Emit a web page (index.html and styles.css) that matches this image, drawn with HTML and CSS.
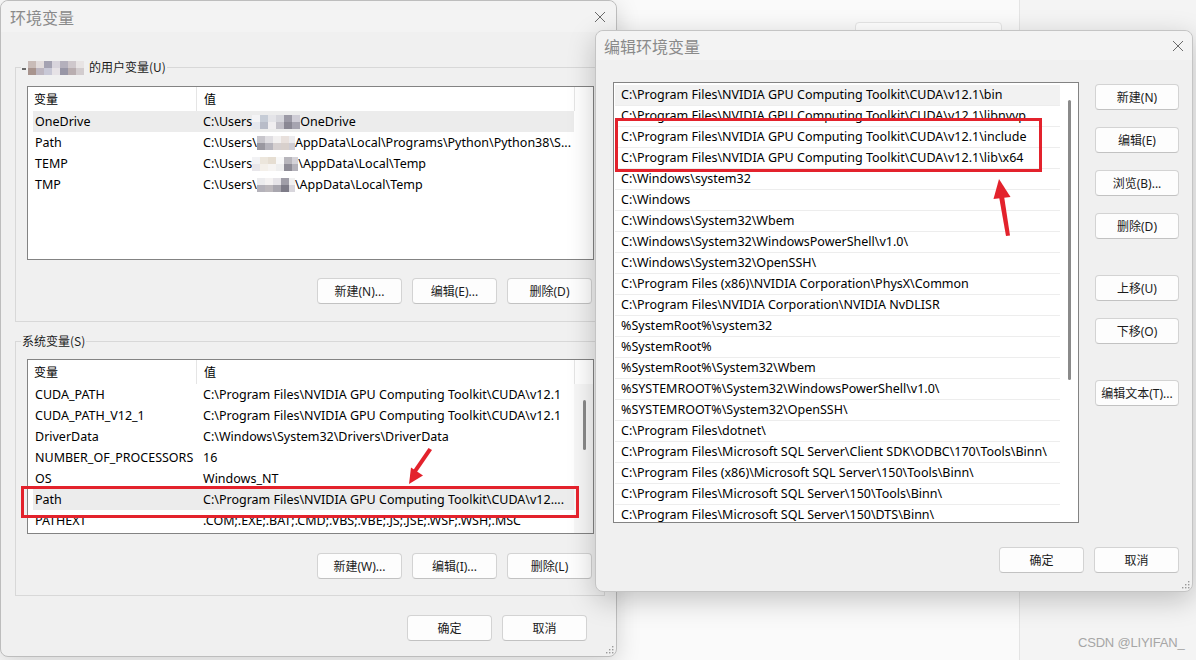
FILE: index.html
```html
<!DOCTYPE html>
<html lang="zh-CN">
<head>
    <meta charset="UTF-8">
    <title>环境变量</title>
    <link rel="stylesheet" href="styles.css">
</head>
<body>
<div class="desktop">
    <div class="bg-pane"></div>
    <div class="bg-box"></div>
    <div class="watermark">CSDN @LIYIFAN_</div>

    <!-- 环境变量 -->
    <section class="dialog env-dialog">
        <header class="titlebar">
            <span class="title">环境变量</span>
            <svg class="close" width="12" height="12" viewBox="0 0 12 12"><path d="M1 1L11 11M11 1L1 11"/></svg>
        </header>
        <div class="env-body">
            <fieldset class="group group-user">
                <legend>
                    <svg class="mosaic" width="64" height="16" viewBox="0 0 64 16">
                        <rect x="0" y="9" width="4" height="2" fill="#6a6a6a"/>
                        <rect x="6" y="2" width="8" height="7" fill="#c9bcb8"/>
                        <rect x="6" y="9" width="8" height="7" fill="#a8948e"/>
                        <rect x="14" y="2" width="8" height="7" fill="#e2dcdc"/>
                        <rect x="14" y="9" width="8" height="7" fill="#bdb6c0"/>
                        <rect x="22" y="2" width="8" height="7" fill="#a4a2b2"/>
                        <rect x="22" y="9" width="8" height="7" fill="#c8c8d6"/>
                        <rect x="30" y="2" width="8" height="7" fill="#d8d4dc"/>
                        <rect x="30" y="9" width="8" height="7" fill="#e6e2e6"/>
                        <rect x="38" y="2" width="8" height="7" fill="#b4b0bc"/>
                        <rect x="38" y="9" width="8" height="7" fill="#9896a6"/>
                        <rect x="46" y="2" width="8" height="7" fill="#cfc8cc"/>
                        <rect x="46" y="9" width="8" height="7" fill="#b9aeb0"/>
                        <rect x="54" y="2" width="8" height="7" fill="#e8e4e4"/>
                        <rect x="54" y="9" width="8" height="7" fill="#d2ccce"/>
                    </svg>
                    <span>的用户变量(U)</span>
                </legend>
                <div class="listview lv-user">
                    <div class="lv-head"><span class="col-name">变量</span><span class="col-value">值</span><span class="col-end"></span></div>
                    <div class="lv-body">
                        <div class="lv-rows">
                            <div class="lv-row selected"><span class="col-name">OneDrive</span><span class="col-value">C:\Users<svg class="mosaic" width="48" height="14" viewBox="0 0 48 14"><rect x="0" y="0" width="8" height="7" fill="#f4f4f6"/><rect x="0" y="7" width="8" height="7" fill="#e6e8ee"/><rect x="8" y="0" width="8" height="7" fill="#c6ccd6"/><rect x="8" y="7" width="8" height="7" fill="#b8bcc8"/><rect x="16" y="0" width="8" height="7" fill="#e4e4e8"/><rect x="16" y="7" width="8" height="7" fill="#f0eef0"/><rect x="24" y="0" width="8" height="7" fill="#d6d6dc"/><rect x="24" y="7" width="8" height="7" fill="#c2c0c8"/><rect x="32" y="0" width="8" height="7" fill="#9c9aa6"/><rect x="32" y="7" width="8" height="7" fill="#8a8894"/><rect x="40" y="0" width="8" height="7" fill="#cfcdd6"/><rect x="40" y="7" width="8" height="7" fill="#a6a4b0"/></svg>OneDrive</span></div>
                            <div class="lv-row"><span class="col-name">Path</span><span class="col-value">C:\Users\<svg class="mosaic" width="38" height="14" viewBox="0 0 38 14"><rect x="0" y="0" width="8" height="7" fill="#c8c6cc"/><rect x="0" y="7" width="8" height="7" fill="#9a98a0"/><rect x="8" y="0" width="8" height="7" fill="#e0dee2"/><rect x="8" y="7" width="8" height="7" fill="#b6b4bc"/><rect x="16" y="0" width="8" height="7" fill="#f2f0f0"/><rect x="16" y="7" width="8" height="7" fill="#d6d0d0"/><rect x="24" y="0" width="8" height="7" fill="#e8e0dc"/><rect x="24" y="7" width="8" height="7" fill="#d8d0cc"/><rect x="32" y="0" width="6" height="7" fill="#ecebee"/><rect x="32" y="7" width="6" height="7" fill="#cfcdd4"/></svg>AppData\Local\Programs\Python\Python38\S...</span></div>
                            <div class="lv-row"><span class="col-name">TEMP</span><span class="col-value">C:\Users<svg class="mosaic" width="46" height="14" viewBox="0 0 46 14"><rect x="0" y="0" width="8" height="7" fill="#f2f2f4"/><rect x="0" y="7" width="8" height="7" fill="#e8e6ea"/><rect x="8" y="0" width="8" height="7" fill="#ece6dc"/><rect x="8" y="7" width="8" height="7" fill="#f4f0ea"/><rect x="16" y="0" width="8" height="7" fill="#e6ded2"/><rect x="16" y="7" width="8" height="7" fill="#f6f4f2"/><rect x="24" y="0" width="8" height="7" fill="#f8f8f8"/><rect x="24" y="7" width="8" height="7" fill="#eeeeee"/><rect x="32" y="0" width="8" height="7" fill="#b8b6bc"/><rect x="32" y="7" width="8" height="7" fill="#8e8c96"/><rect x="40" y="0" width="6" height="7" fill="#d4d2d8"/><rect x="40" y="7" width="6" height="7" fill="#b4b2ba"/></svg>\AppData\Local\Temp</span></div>
                            <div class="lv-row"><span class="col-name">TMP</span><span class="col-value">C:\Users\<svg class="mosaic" width="38" height="14" viewBox="0 0 38 14"><rect x="0" y="0" width="8" height="7" fill="#ececee"/><rect x="0" y="7" width="8" height="7" fill="#b4b2ba"/><rect x="8" y="0" width="8" height="7" fill="#f4f2f2"/><rect x="8" y="7" width="8" height="7" fill="#bcb8bc"/><rect x="16" y="0" width="8" height="7" fill="#e6e4e8"/><rect x="16" y="7" width="8" height="7" fill="#a8a6ae"/><rect x="24" y="0" width="8" height="7" fill="#a09ea8"/><rect x="24" y="7" width="8" height="7" fill="#7e7c88"/><rect x="32" y="0" width="6" height="7" fill="#f0f0f0"/><rect x="32" y="7" width="6" height="7" fill="#d8d6dc"/></svg>\AppData\Local\Temp</span></div>
                        </div>
                        <div class="lv-scroll"></div>
                    </div>
                </div>
                <div class="btn-row">
                    <button class="btn">新建(N)...</button>
                    <button class="btn">编辑(E)...</button>
                    <button class="btn">删除(D)</button>
                </div>
            </fieldset>

            <fieldset class="group group-system">
                <legend><span>系统变量(S)</span></legend>
                <div class="listview lv-system">
                    <div class="lv-head"><span class="col-name">变量</span><span class="col-value">值</span><span class="col-end"></span></div>
                    <div class="lv-body">
                        <div class="lv-rows">
                            <div class="lv-row"><span class="col-name">CUDA_PATH</span><span class="col-value">C:\Program Files\NVIDIA GPU Computing Toolkit\CUDA\v12.1</span></div>
                            <div class="lv-row"><span class="col-name">CUDA_PATH_V12_1</span><span class="col-value">C:\Program Files\NVIDIA GPU Computing Toolkit\CUDA\v12.1</span></div>
                            <div class="lv-row"><span class="col-name">DriverData</span><span class="col-value">C:\Windows\System32\Drivers\DriverData</span></div>
                            <div class="lv-row"><span class="col-name">NUMBER_OF_PROCESSORS</span><span class="col-value">16</span></div>
                            <div class="lv-row"><span class="col-name">OS</span><span class="col-value">Windows_NT</span></div>
                            <div class="lv-row selected"><span class="col-name">Path</span><span class="col-value">C:\Program Files\NVIDIA GPU Computing Toolkit\CUDA\v12....</span></div>
                            <div class="lv-row"><span class="col-name">PATHEXT</span><span class="col-value">.COM;.EXE;.BAT;.CMD;.VBS;.VBE;.JS;.JSE;.WSF;.WSH;.MSC</span></div>
                        </div>
                        <div class="lv-scroll has-track"><div class="thumb"></div></div>
                    </div>
                </div>
                <div class="btn-row">
                    <button class="btn">新建(W)...</button>
                    <button class="btn">编辑(I)...</button>
                    <button class="btn">删除(L)</button>
                </div>
            </fieldset>

            <div class="actions env-actions">
                <button class="btn">确定</button>
                <button class="btn">取消</button>
            </div>
        </div>
        <svg class="grip" width="9" height="9" viewBox="0 0 9 9"><g fill="#9a9a9a"><rect x="7" y="1" width="1.4" height="1.4"/><rect x="4" y="4" width="1.4" height="1.4"/><rect x="7" y="4" width="1.4" height="1.4"/><rect x="1" y="7" width="1.4" height="1.4"/><rect x="4" y="7" width="1.4" height="1.4"/><rect x="7" y="7" width="1.4" height="1.4"/></g></svg>
    </section>

    <!-- 编辑环境变量 -->
    <section class="dialog edit-dialog">
        <header class="titlebar">
            <span class="title">编辑环境变量</span>
            <svg class="close" width="12" height="12" viewBox="0 0 12 12"><path d="M1 1L11 11M11 1L1 11"/></svg>
        </header>
        <div class="edit-body">
            <div class="edit-main">
                <div class="path-list">
                    <div class="path-rows">
                        <div class="path-row selected">C:\Program Files\NVIDIA GPU Computing Toolkit\CUDA\v12.1\bin</div>
                        <div class="path-row">C:\Program Files\NVIDIA GPU Computing Toolkit\CUDA\v12.1\libnvvp</div>
                        <div class="path-row">C:\Program Files\NVIDIA GPU Computing Toolkit\CUDA\v12.1\include</div>
                        <div class="path-row">C:\Program Files\NVIDIA GPU Computing Toolkit\CUDA\v12.1\lib\x64</div>
                        <div class="path-row">C:\Windows\system32</div>
                        <div class="path-row">C:\Windows</div>
                        <div class="path-row">C:\Windows\System32\Wbem</div>
                        <div class="path-row">C:\Windows\System32\WindowsPowerShell\v1.0\</div>
                        <div class="path-row">C:\Windows\System32\OpenSSH\</div>
                        <div class="path-row">C:\Program Files (x86)\NVIDIA Corporation\PhysX\Common</div>
                        <div class="path-row">C:\Program Files\NVIDIA Corporation\NVIDIA NvDLISR</div>
                        <div class="path-row">%SystemRoot%\system32</div>
                        <div class="path-row">%SystemRoot%</div>
                        <div class="path-row">%SystemRoot%\System32\Wbem</div>
                        <div class="path-row">%SYSTEMROOT%\System32\WindowsPowerShell\v1.0\</div>
                        <div class="path-row">%SYSTEMROOT%\System32\OpenSSH\</div>
                        <div class="path-row">C:\Program Files\dotnet\</div>
                        <div class="path-row">C:\Program Files\Microsoft SQL Server\Client SDK\ODBC\170\Tools\Binn\</div>
                        <div class="path-row">C:\Program Files (x86)\Microsoft SQL Server\150\Tools\Binn\</div>
                        <div class="path-row">C:\Program Files\Microsoft SQL Server\150\Tools\Binn\</div>
                        <div class="path-row">C:\Program Files\Microsoft SQL Server\150\DTS\Binn\</div>
                    </div>
                    <div class="path-scroll"><div class="thumb"></div></div>
                </div>
                <div class="side-btns">
                    <button class="btn">新建(N)</button>
                    <button class="btn">编辑(E)</button>
                    <button class="btn">浏览(B)...</button>
                    <button class="btn">删除(D)</button>
                    <button class="btn spaced">上移(U)</button>
                    <button class="btn">下移(O)</button>
                    <button class="btn spaced">编辑文本(T)...</button>
                </div>
            </div>
            <div class="actions edit-actions">
                <button class="btn">确定</button>
                <button class="btn">取消</button>
            </div>
        </div>
        <svg class="grip" width="9" height="9" viewBox="0 0 9 9"><g fill="#9a9a9a"><rect x="7" y="1" width="1.4" height="1.4"/><rect x="4" y="4" width="1.4" height="1.4"/><rect x="7" y="4" width="1.4" height="1.4"/><rect x="1" y="7" width="1.4" height="1.4"/><rect x="4" y="7" width="1.4" height="1.4"/><rect x="7" y="7" width="1.4" height="1.4"/></g></svg>
    </section>

    <!-- red marks drawn over the screenshot -->
    <svg class="annotations" width="1196" height="660" viewBox="0 0 1196 660">
        <rect x="22.5" y="487.5" width="555" height="29" fill="none" stroke="#e3222c" stroke-width="3"/>
        <polygon points="432,450 428.5,448 413,470.5 416.5,472.5" fill="#e3222c"/>
        <polygon points="409,484 411,467.5 423,475.5" fill="#e3222c"/>
        <rect x="616.5" y="119.5" width="424" height="51" fill="none" stroke="#e3222c" stroke-width="3"/>
        <polygon points="1006,236 1010,235.5 1004,196 999,196.5" fill="#e3222c"/>
        <polygon points="999,179 993.5,199 1010.5,197" fill="#e3222c"/>
    </svg>
</div>
</body>
</html>
```

FILE: styles.css
```css
* {
    margin: 0;
    padding: 0;
    box-sizing: border-box;
}

body {
    font-family: "Noto Sans", "Noto Sans CJK SC", sans-serif;
    font-size: 12.5px;
    color: #000;
    background: #f9f9f9;
}

.desktop {
    position: relative;
    width: 1196px;
    height: 660px;
    overflow: hidden;
    background: #fafafa;
}

/* page behind the dialogs */
.bg-pane {
    position: absolute;
    left: 1019px;
    top: 0;
    width: 177px;
    height: 660px;
    background: #f4f4f4;
    border-left: 1px solid #e4e4e4;
}

.bg-box {
    position: absolute;
    left: 855px;
    top: 22px;
    width: 147px;
    height: 40px;
    background: #fff;
    border: 1px solid #e6e6e6;
    border-radius: 4px;
}

.watermark {
    position: absolute;
    left: 1078px;
    top: 635px;
    font-family: "Liberation Sans", sans-serif;
    font-size: 13px;
    letter-spacing: -0.2px;
    color: #a6a6a6;
}

.annotations {
    position: absolute;
    left: 0;
    top: 0;
    pointer-events: none;
}

/* dialog windows */
.dialog {
    position: absolute;
    background: #f0f0f0;
    border: 1px solid #bdbdbd;
    border-radius: 8px;
    box-shadow: 0 6px 24px rgba(0, 0, 0, 0.16);
}

.env-dialog {
    left: 0;
    top: 0;
    width: 617px;
    height: 657px;
}

.edit-dialog {
    left: 595px;
    top: 30px;
    width: 598px;
    height: 562px;
    border-color: #c4c4c4;
    box-shadow: 0 8px 28px rgba(0, 0, 0, 0.22);
}

.titlebar {
    display: flex;
    align-items: center;
    justify-content: space-between;
    background: #f3f3f3;
    border-radius: 8px 8px 0 0;
}

.env-dialog .titlebar {
    height: 31px;
    padding: 0 10px 0 9px;
}

.edit-dialog .titlebar {
    height: 29px;
    padding: 0 8px 0 8px;
}

.title {
    font-family: "Noto Sans CJK SC", sans-serif;
    font-size: 16px;
    color: #8a8a8a;
}

.close {
    fill: none;
    stroke: #6a6a6a;
    stroke-width: 1;
}

.grip {
    position: absolute;
    right: 2px;
    bottom: 2px;
}

/* buttons */
.btn {
    width: 85px;
    height: 26px;
    font-family: "Noto Sans", "Noto Sans CJK SC", sans-serif;
    font-size: 12px;
    color: #1b1b1b;
    background: #fdfdfd;
    border: 1px solid #d3d3d3;
    border-bottom-color: #c2c2c2;
    border-radius: 4px;
}

.btn-row {
    display: flex;
    justify-content: flex-end;
    gap: 10px;
    width: 567px;
    padding-right: 2px;
}

.actions {
    display: flex;
    justify-content: flex-end;
    gap: 10px;
}

/* 环境变量 body */
.env-body {
    padding: 27px 0 0 14px;
}

.group {
    width: 590px;
    border: 1px solid #d8d8d8;
    padding: 0 10px 0 11px;
}

.group legend {
    display: flex;
    align-items: center;
    gap: 3px;
    height: 16px;
    line-height: 16px;
    margin-left: -6px;
    padding: 0 1px;
    font-family: "Noto Sans CJK SC", sans-serif;
    font-size: 12px;
    color: #1b1b1b;
}

.group-user {
    padding-top: 11px;
    padding-bottom: 17px;
}

.group-user .btn-row {
    margin-top: 18px;
}

.group-system {
    margin-top: 11px;
    padding-top: 10px;
    padding-bottom: 16px;
}

.group-system .btn-row {
    margin-top: 19px;
}

.env-actions {
    margin-top: 19px;
    width: 572px;
}

/* list views */
.listview {
    width: 567px;
    background: #fff;
    border: 1px solid #838383;
    overflow: hidden;
}

.lv-user {
    height: 174px;
}

.lv-system {
    height: 175px;
}

.lv-head {
    display: grid;
    grid-template-columns: 168px 378px 19px;
    height: 24px;
    line-height: 23px;
    font-family: "Noto Sans CJK SC", sans-serif;
    font-size: 12px;
}

.lv-head .col-name {
    padding-left: 6px;
}

.lv-head .col-value {
    padding-left: 7px;
    border-left: 1px solid #e5e5e5;
}

.lv-head .col-end {
    border-left: 1px solid #e5e5e5;
}

.lv-body {
    display: flex;
}

.lv-rows {
    width: 546px;
    padding-left: 5px;
}

.lv-row {
    display: grid;
    grid-template-columns: 163px 378px;
    height: 21px;
    line-height: 21px;
    white-space: nowrap;
}

.lv-row.selected {
    background: #ececec;
}

.lv-row .col-name {
    padding-left: 2px;
}

.lv-row .col-value {
    padding-left: 7px;
    overflow: hidden;
}

.mosaic {
    vertical-align: -3px;
}

.lv-scroll {
    position: relative;
    width: 19px;
    height: 150px;
}

.lv-scroll.has-track {
    background: #f7f7f7;
}

.lv-scroll .thumb {
    position: absolute;
    left: 9px;
    top: 16px;
    width: 3px;
    height: 50px;
    border-radius: 2px;
    background: #8a8a8a;
}

/* 编辑环境变量 body */
.edit-body {
    padding: 22px 13px 0 17px;
}

.edit-main {
    display: flex;
    gap: 16px;
}

.path-list {
    display: flex;
    width: 466px;
    height: 441px;
    background: #fff;
    border: 1px solid #838383;
    overflow: hidden;
}

.path-rows {
    width: 446px;
    padding: 2px 0 0 1px;
}

.path-row {
    height: 21px;
    line-height: 20px;
    padding-left: 6px;
    border-bottom: 1px solid #ededed;
    white-space: nowrap;
    overflow: hidden;
}

.path-row.selected {
    background: #f2f2f2;
}

.path-scroll {
    position: relative;
    flex: 1;
}

.path-scroll .thumb {
    position: absolute;
    left: 8px;
    top: 17px;
    width: 3px;
    height: 280px;
    border-radius: 2px;
    background: #8a8a8a;
}

.side-btns {
    display: flex;
    flex-direction: column;
    gap: 17px;
    padding-top: 2px;
}

.side-btns .btn {
    width: 84px;
}

.side-btns .spaced {
    margin-top: 19px;
}

.edit-actions {
    margin-top: 24px;
}
```
